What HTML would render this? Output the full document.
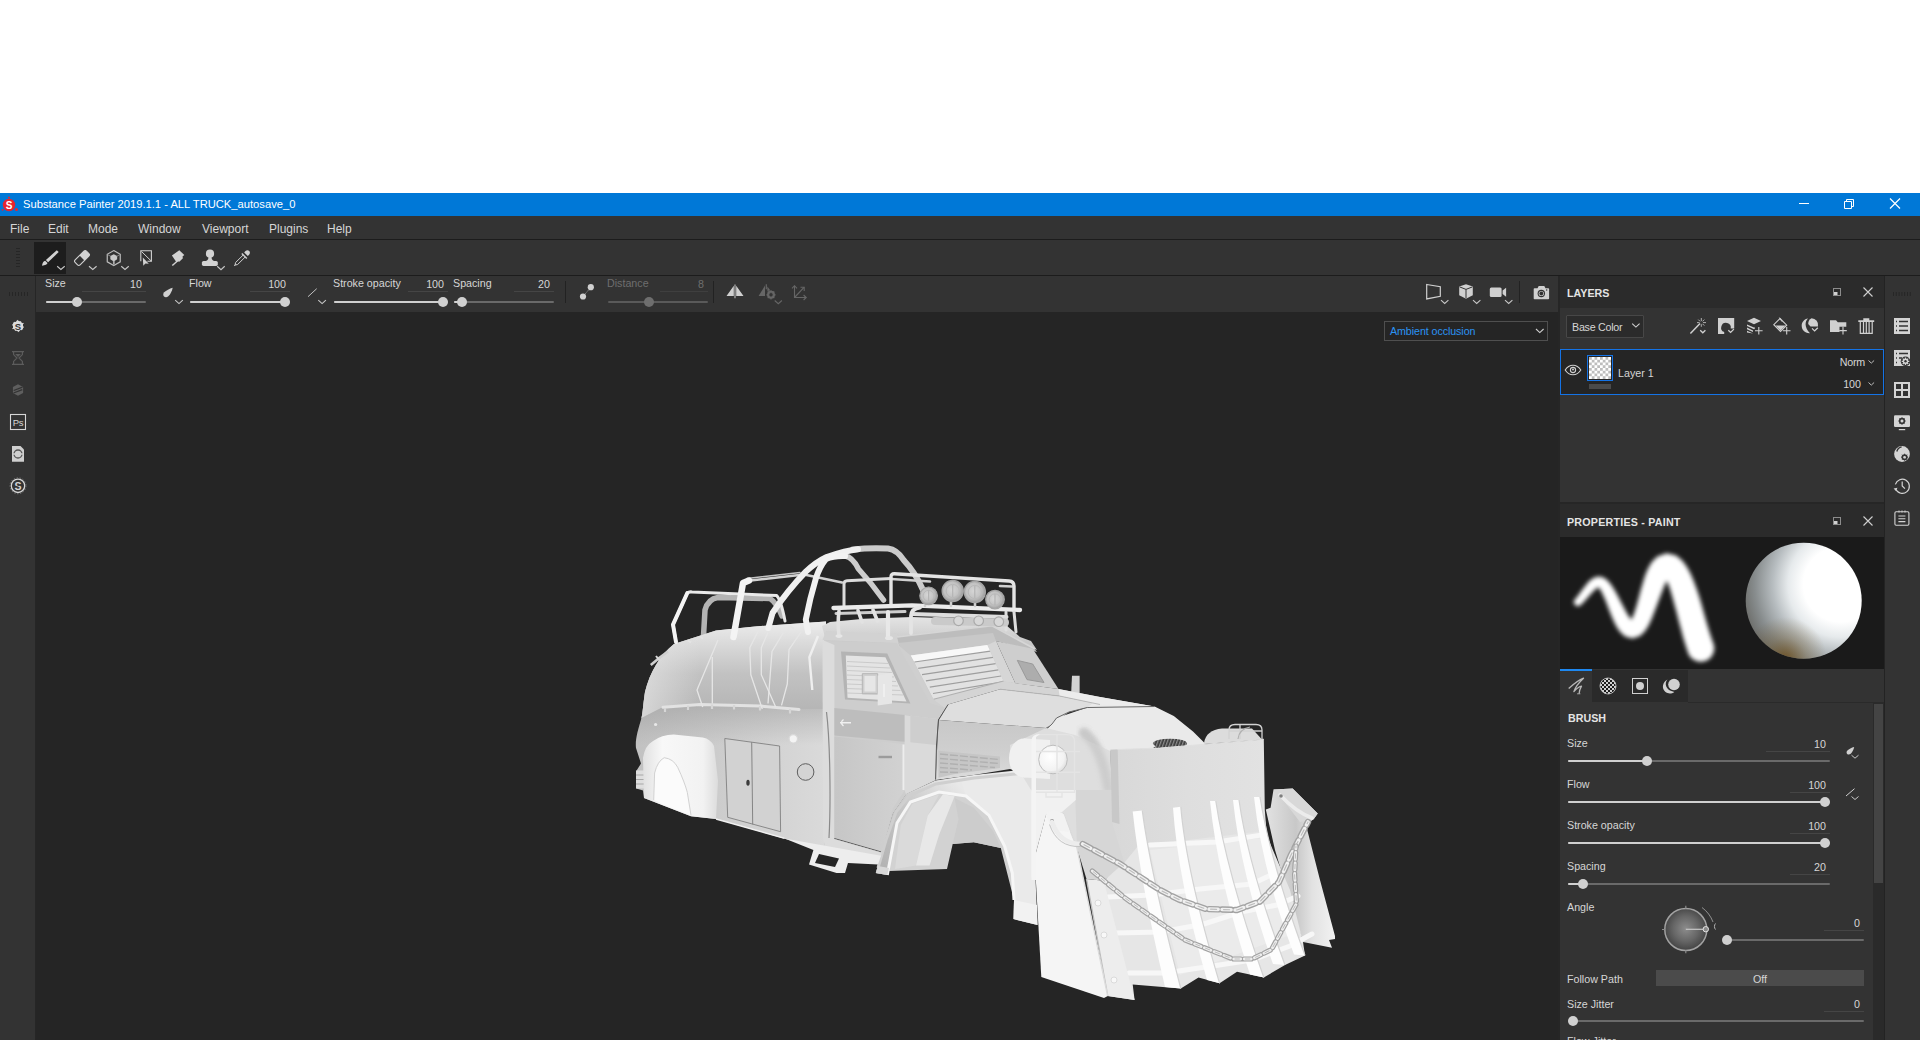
<!DOCTYPE html>
<html lang="en">
<head>
<meta charset="utf-8">
<title>Substance Painter 2019.1.1 - ALL TRUCK_autosave_0</title>
<style>
html,body{margin:0;padding:0;}
body{width:1920px;height:1040px;background:#fff;position:relative;overflow:hidden;font-family:"Liberation Sans","DejaVu Sans",sans-serif;font-size:10.7px;color:#d6d6d6;}
.a{position:absolute;}
.t{position:absolute;white-space:nowrap;line-height:14px;height:14px;}
.r{text-align:right;}
.b{font-weight:bold;}
.dim{color:#6e6e6e;}
.trk{position:absolute;height:2px;background:#6a6a6a;border-radius:1px;}
.fil{position:absolute;height:2px;background:#d0d0d0;border-radius:1px;}
.kn{position:absolute;width:10px;height:10px;border-radius:5px;background:#d0d0d0;}
.ul{position:absolute;height:1px;background:#454545;}
.sep{position:absolute;width:1px;background:#222;}
svg{position:absolute;overflow:visible;}
</style>
</head>
<body>
<!-- window background -->
<div class="a" style="left:0;top:193px;width:1920px;height:847px;background:#333333"></div>

<!-- title bar -->
<div class="a" id="titlebar" style="left:0;top:193px;width:1920px;height:23px;background:#0078d7"></div>
<svg style="left:1px;top:195px" width="18" height="18" viewBox="0 0 18 18">
  <circle cx="8" cy="10" r="6.2" fill="#e8232e"/>
  <circle cx="8" cy="2.4" r="1" fill="#e8232e"/>
  <circle cx="15.5" cy="14.6" r="1.5" fill="#e8232e"/>
  <circle cx="1.6" cy="14.8" r="0.9" fill="#e8232e"/>
  <text x="8" y="13.6" font-size="10" font-weight="bold" text-anchor="middle" fill="#fff" font-family="Liberation Sans, sans-serif">S</text>
</svg>
<div class="t" id="titletext" style="left:23px;top:197px;font-size:11.2px;color:#fff">Substance Painter 2019.1.1 - ALL TRUCK_autosave_0</div>
<svg style="left:1780px;top:193px" width="140" height="23" viewBox="0 0 140 23" fill="none" stroke="#fff" stroke-width="1">
  <path d="M19 10.5h10"/>
  <path d="M64.5 8.500h7v7h-7z M66.500 8.500v-2h7v7h-2"/>
  <path d="M110 5.500l10 10 M120 5.500l-10 10" stroke-width="1.2"/>
</svg>

<!-- menu bar -->
<div class="a" style="left:0;top:239px;width:1920px;height:1px;background:#1c1c1c"></div>
<div class="t menu" style="left:10px;top:222px;font-size:12px">File</div>
<div class="t menu" style="left:48px;top:222px;font-size:12px">Edit</div>
<div class="t menu" style="left:88px;top:222px;font-size:12px">Mode</div>
<div class="t menu" style="left:138px;top:222px;font-size:12px">Window</div>
<div class="t menu" style="left:202px;top:222px;font-size:12px">Viewport</div>
<div class="t menu" style="left:269px;top:222px;font-size:12px">Plugins</div>
<div class="t menu" style="left:327px;top:222px;font-size:12px">Help</div>

<!-- tool bar -->
<div class="a" style="left:0;top:275px;width:1920px;height:1px;background:#1c1c1c"></div>
<div class="a" style="left:34px;top:242px;width:32px;height:32px;background:#1d1d1d"></div>
<!-- grip -->
<svg style="left:16px;top:248px" width="4" height="22" viewBox="0 0 4 22" stroke="#262626" stroke-width="1"><path d="M0 .5h4M0 3.500h4M0 6.500h4M0 9.500h4M0 12.500h4M0 15.500h4M0 18.500h4"/></svg>
<svg style="left:0;top:240px" width="300" height="36" viewBox="0 0 300 36" fill="#d2d2d2" stroke="none">
  <!-- brush -->
  <path d="M56.800 10.200l1.900 1.900-10.600 10.100-2.200-2.200z"/>
  <path d="M45.200 20.800l2.300 2.300c-.2 1.500-2.300 2.400-5.500 2.700.4-2.900 1.500-4.700 3.200-5z"/>
  <path d="M57.200 26.250l3.700 3.200 3.800-3.200" fill="none" stroke="#c8c8c8" stroke-width="1.100"/>
  <!-- eraser -->
  <g transform="translate(82 18) rotate(-45)">
    <rect x="-8" y="-3.500" width="16" height="7" rx="1.800" fill="none" stroke="#d2d2d2" stroke-width="1.100"/>
    <path d="M0 -3.500h6.200a1.800 1.800 0 0 1 1.800 1.800v3.400a1.800 1.800 0 0 1-1.800 1.800h-6.200z"/>
  </g>
  <path d="M89 26.250l3.800 3.200 3.800-3.200" fill="none" stroke="#c8c8c8" stroke-width="1.100"/>
  <!-- cube -->
  <path d="M113.750 10.600l6.500 3.750v7.500l-6.500 3.750-6.500-3.750v-7.500z" fill="none" stroke="#bdbdbd" stroke-width="1.200"/>
  <path d="M113.750 14.200l3.400 1.800v3.300l-2.600 1.600v3.300h-1.600v-3.300l-2.600-1.600v-3.300z" fill="#c8c8c8"/>
  <path d="M107.600 14.600l3.400 1.900M119.900 14.600l-3.400 1.900M113.750 21v4.300" stroke="#9a9a9a" stroke-width=".8" fill="none"/>
  <path d="M121.250 26.250l3.750 3.200 3.750-3.200" fill="none" stroke="#c8c8c8" stroke-width="1.100"/>
  <!-- selection -->
  <path d="M140.800 21.200v-10.400h10.600v10.400h-4" fill="none" stroke="#d2d2d2" stroke-width="1.100"/>
  <path d="M141.500 11.500l9.500 9.300" fill="none" stroke="#d2d2d2" stroke-width="1"/>
  <path d="M142.800 17.600l.5 8.200 2.100-2.300 3.400.2z"/>
  <!-- smudge -->
  <path d="M179.300 10.200l5 4.700-1.800 1.700.4 1.600-3.600 3.600-1.600-.6-1.200 1.100-4.600-6.900z"/>
  <path d="M178 20.400l-5.700 5.200" fill="none" stroke="#d2d2d2" stroke-width="1.400"/>
  <!-- stamp -->
  <circle cx="210" cy="13.700" r="4.100"/>
  <path d="M208.600 16h2.800c0 2.500.6 4.200 2.600 5h-8c2-.8 2.600-2.500 2.600-5z"/>
  <rect x="201.900" y="20.900" width="15.900" height="5" rx="1.600"/>
  <path d="M217.200 26.250l3.800 3.400 3.700-3.400" fill="none" stroke="#c8c8c8" stroke-width="1.100"/>
  <!-- eyedropper -->
  <path d="M244.200 12.400l3.600 3.500 1.300-1.200c1.100-1.100 1.100-2.700.1-3.700-1-1-2.600-1-3.700.1z"/>
  <path d="M242.300 13l5 4.900-1 1-5-4.900z"/>
  <path d="M243 15.200l-7.400 7.300-.6 2.600 2.600-.6 7.400-7.300" fill="none" stroke="#d2d2d2" stroke-width="1"/>
  <path d="M235.300 24.800l-1.200 1.100" fill="none" stroke="#d2d2d2" stroke-width=".9"/>
</svg>


<!-- second toolbar / viewport -->
<div class="a" id="viewport" style="left:36px;top:312px;width:1522px;height:728px;background:#252525"></div>
<div class="a" style="left:35px;top:276px;width:1px;height:764px;background:#262626"></div>
<div class="a" style="left:1558px;top:276px;width:2px;height:764px;background:#262626"></div>
<svg style="left:9px;top:292px" width="20" height="4" viewBox="0 0 20 4" stroke="#262626" stroke-width="1"><path d="M.5 0v4M3.500 0v4M6.500 0v4M9.500 0v4M12.500 0v4M15.500 0v4M18.500 0v4"/></svg>
<!-- ===== context toolbar ===== -->
<div class="t" style="left:45px;top:276px">Size</div>
<div class="t r" style="left:102px;width:40px;top:277px">10</div>
<div class="ul" style="left:82px;top:291px;width:64px"></div>
<div class="trk" style="left:46px;top:301px;width:100px"></div>
<div class="fil" style="left:46px;top:301px;width:31px"></div>
<div class="kn" style="left:72px;top:297px"></div>

<div class="t" style="left:189px;top:276px">Flow</div>
<div class="t r" style="left:246px;width:40px;top:277px">100</div>
<div class="ul" style="left:250px;top:291px;width:40px"></div>
<div class="trk" style="left:190px;top:301px;width:100px"></div>
<div class="fil" style="left:190px;top:301px;width:95px"></div>
<div class="kn" style="left:280px;top:297px"></div>

<div class="t" style="left:333px;top:276px">Stroke opacity</div>
<div class="t r" style="left:404px;width:40px;top:277px">100</div>
<div class="ul" style="left:408px;top:291px;width:40px"></div>
<div class="trk" style="left:334px;top:301px;width:114px"></div>
<div class="fil" style="left:334px;top:301px;width:109px"></div>
<div class="kn" style="left:438px;top:297px"></div>

<div class="t" style="left:453px;top:276px">Spacing</div>
<div class="t r" style="left:510px;width:40px;top:277px">20</div>
<div class="ul" style="left:514px;top:291px;width:40px"></div>
<div class="trk" style="left:454px;top:301px;width:100px"></div>
<div class="fil" style="left:454px;top:301px;width:8px"></div>
<div class="kn" style="left:457px;top:297px"></div>

<div class="sep" style="left:565px;top:281px;height:22px"></div>

<div class="t dim" style="left:607px;top:276px">Distance</div>
<div class="t r dim" style="left:664px;width:40px;top:277px">8</div>
<div class="ul" style="left:660px;top:291px;width:48px;background:#3f3f3f"></div>
<div class="trk" style="left:608px;top:301px;width:100px;background:#5a5a5a"></div>
<div class="kn" style="left:644px;top:297px;background:#6e6e6e"></div>

<div class="sep" style="left:713px;top:281px;height:22px"></div>
<div class="sep" style="left:1519px;top:281px;height:22px"></div>

<svg style="left:150px;top:276px" width="700" height="36" viewBox="150 0 700 36" fill="#d0d0d0">
  <!-- size pressure icon -->
  <path d="M172.700 11.700c-.6 3.200-2.400 6.700-4.400 8.600-1.300 1.200-3.200 1.300-4.300.2-1.100-1.100-1-3 .2-4.200 1.900-1.900 5.300-3.800 8.500-4.600z"/>
  <path d="M175.200 24.200l3.800 3.400 3.800-3.400" fill="none" stroke="#c8c8c8" stroke-width="1.100"/>
  <!-- flow line icon -->
  <path d="M308 20.700l8.700-8" fill="none" stroke="#d0d0d0" stroke-width=".9"/>
  <path d="M318.300 24.200l3.800 3.400 3.800-3.400" fill="none" stroke="#c8c8c8" stroke-width="1.100"/>
  <!-- lazy mouse -->
  <circle cx="590.800" cy="11.200" r="3.100"/>
  <circle cx="583" cy="20.500" r="3.100"/>
  <path d="M588.700 13.800l-3.600 4.200" stroke="#bdbdbd" stroke-width=".9" stroke-dasharray="1 1.400" fill="none"/>
  <!-- symmetry -->
  <path d="M733.800 9.800v10.200h-7.300z M736.200 9.800v10.200h7.300z" fill="#d0d0d0"/>
  <path d="M735 8.600v13.600" stroke="#a0a0a0" stroke-width="1.400"/>
  <!-- symmetry settings (dim) -->
  <g fill="#666">
    <path d="M765 9.600v10.400h-6.400z"/><path d="M766.300 8.200v5" stroke="#666" stroke-width="1.200"/>
    <path d="M767.400 10.500l3 4-3 .6z"/>
    <circle cx="771" cy="18.800" r="3.100" fill="none" stroke="#666" stroke-width="1.700"/>
    <path d="M771 14.200v9.200M766.400 18.800h9.200M767.700 15.500l6.600 6.600M774.300 15.500l-6.600 6.600" stroke="#666" stroke-width="1.200"/>
    <circle cx="771" cy="18.800" r="1.700" fill="#333"/>
    <path d="M774.700 24.500l3.600 3.200 3.600-3.200" fill="none" stroke="#666" stroke-width="1.100"/>
  </g>
  <!-- transform (dim) -->
  <g fill="none" stroke="#666" stroke-width="1.100">
    <path d="M794.500 9.800v11.700h11.700"/>
    <path d="M792 12.300l2.500-2.600 2.500 2.600"/>
    <path d="M803.600 19l2.600 2.500-2.600 2.500"/>
    <path d="M795 21l9-9.600"/>
    <path d="M800.500 11.200h3.700v3.700"/>
  </g>
</svg>

<!-- right side view icons -->
<svg style="left:1420px;top:276px" width="140" height="36" viewBox="1420 0 140 36" fill="#d0d0d0">
  <path d="M1426.700 8.500l13.600 2.200v9.600l-13.600 2.600z" fill="none" stroke="#d0d0d0" stroke-width="1.200"/>
  <path d="M1441 24.200l3.700 3.200 3.700-3.200" fill="none" stroke="#c8c8c8" stroke-width="1.100"/>
  <path d="M1466 8.300l6.800 2.300v8.600l-6.800 3.500-6.800-3.500v-8.600z"/>
  <path d="M1459.600 10.900l6.400 2.500 6.400-2.500M1466 13.400v8.800" fill="none" stroke="#333" stroke-width="1"/>
  <path d="M1473 24.200l3.700 3.200 3.700-3.200" fill="none" stroke="#c8c8c8" stroke-width="1.100"/>
  <rect x="1489.800" y="11.400" width="11.800" height="9.600" rx="1.500"/>
  <path d="M1502.600 14.600l3.500-2.800v9l-3.500-2.800z"/>
  <path d="M1505 24.200l3.700 3.200 3.700-3.200" fill="none" stroke="#c8c8c8" stroke-width="1.100"/>
  <!-- photo camera -->
  <path d="M1534.500 12.300h3l1.200-2.400h5.600l1.200 2.400h2.800c.5 0 .8.300.8.800v9.300c0 .5-.3.800-.8.800h-13.800c-.5 0-.8-.3-.8-.8v-9.300c0-.5.300-.8.800-.8z"/>
  <circle cx="1541.300" cy="17.500" r="3.700" fill="#333"/>
  <circle cx="1541.300" cy="17.500" r="2.600" fill="#d0d0d0"/>
  <circle cx="1541.300" cy="17.500" r="1.900" fill="#333"/>
  <circle cx="1546.700" cy="14" r=".7" fill="#333"/>
</svg>

<!-- Ambient occlusion dropdown -->
<div class="a" style="left:1384px;top:321px;width:162px;height:18px;border:1px solid #4f4f4f;background:#252525"></div>
<div class="t" style="left:1390px;top:324px;color:#2b93f3;letter-spacing:-0.08px">Ambient occlusion</div>
<svg style="left:1534px;top:326px" width="12" height="10" viewBox="0 0 12 10" fill="none" stroke="#d0d0d0" stroke-width="1.100"><path d="M2 3l3.800 3.600 3.800-3.600"/></svg>
<!-- ===== left dock icons ===== -->
<svg style="left:0;top:312px" width="36" height="200" viewBox="0 312 36 200">
  <!-- substance share -->
  <path d="M18 319.800l5.600 3.100v6.200l-5.600 3.100-5.600-3.100v-6.200z" fill="#dcdcdc"/>
  <path d="M18 319.800l5.600 3.100v6.200l-5.600 3.100-5.600-3.100v-6.200z" fill="none" stroke="#333" stroke-width="1.200" stroke-dasharray="2.200 1.600"/>
  <path d="M18 320.800l4.600 2.600v5.200l-4.600 2.600-4.600-2.600v-5.200z" fill="#dcdcdc"/>
  <text x="18" y="329.600" font-size="9.500" font-weight="bold" text-anchor="middle" fill="#333" font-family="Liberation Sans, sans-serif">S</text>
  <!-- hourglass -->
  <g stroke="#5c5c5c" stroke-width="1.200" fill="none">
    <path d="M12 351.600h12M12 364.400h12"/>
    <path d="M13.600 352v2.600l3.400 3.400-3.400 3.400v2.600M22.400 352v2.600l-3.400 3.400 3.400 3.400v2.600"/>
  </g>
  <path d="M15.200 354h5.600l-2.800 3z" fill="#5c5c5c"/>
  <!-- substance dim -->
  <path d="M18 384.200l5.100 2.900v5.800l-5.100 2.900-5.100-2.900v-5.800z" fill="#5e5e5e"/>
  <path d="M22.500 387.200l-8.800 3.300M22.300 389.700l-8.800 3.300" stroke="#333" stroke-width="1.300"/>
  <!-- Ps -->
  <rect x="10.500" y="414.500" width="15" height="15" fill="none" stroke="#d6d6d6" stroke-width="1.100"/>
  <text x="18" y="426" font-size="9.500" text-anchor="middle" fill="#d6d6d6" font-family="Liberation Sans, sans-serif" letter-spacing="-.2">Ps</text>
  <!-- resource updater -->
  <path d="M12 446h8.500l3.500 3.500v12.200h-12z" fill="#cfcfcf"/>
  <circle cx="18" cy="454" r="4" fill="none" stroke="#555" stroke-width="1.300"/>
  <path d="M13 454h3M20 454h3" stroke="#cfcfcf" stroke-width="1.600"/>
  <!-- substance source -->
  <circle cx="18" cy="485.800" r="6.700" fill="none" stroke="#d6d6d6" stroke-width="1.300"/>
  <circle cx="18" cy="485.800" r="8" fill="none" stroke="#8a8a8a" stroke-width=".7" stroke-dasharray="1.500 1.500"/>
  <text x="18" y="489.600" font-size="10.500" font-weight="bold" text-anchor="middle" fill="#d6d6d6" font-family="Liberation Sans, sans-serif">S</text>
  <path d="M13.500 487.500l9-3.400" stroke="#333" stroke-width="1"/>
</svg>
<!-- ===== LAYERS panel ===== -->
<div class="a" style="left:1560px;top:276px;width:324px;height:32px;background:#2b2b2b"></div>
<div class="t b" id="layers-title" style="left:1567px;top:286px;font-size:10.7px;color:#e4e4e4">LAYERS</div>
<svg style="left:1830px;top:284px" width="50" height="16" viewBox="1830 284 50 16" fill="none" stroke="#d0d0d0" stroke-width="1">
  <rect x="1833.500" y="288.500" width="7" height="7" stroke="#8c8c8c"/>
  <rect x="1834" y="292" width="3.500" height="3" fill="#d0d0d0" stroke="none"/>
  <path d="M1863.500 287.500l9 9M1872.500 287.500l-9 9" stroke-width="1.100"/>
</svg>
<!-- channel dropdown -->
<div class="a" style="left:1566px;top:315px;width:78px;height:23px;border:1px solid #474747;background:#2b2b2b;box-sizing:border-box;border-radius:1px"></div>
<div class="t" style="left:1572px;top:320px;letter-spacing:-0.25px">Base Color</div>
<svg style="left:1630px;top:321px" width="12" height="10" viewBox="0 0 12 10" fill="none" stroke="#d0d0d0" stroke-width="1.100"><path d="M2.200 2.600l3.700 3.500 3.700-3.500"/></svg>
<!-- layer toolbar icons -->
<svg style="left:1685px;top:312px" width="200" height="28" viewBox="1685 312 200 28" fill="#d0d0d0">
  <!-- wand -->
  <path d="M1690.400 333.500l9.600-10" fill="none" stroke="#d0d0d0" stroke-width="1.500"/>
  <path d="M1701.300 318v3M1701.300 324.200v2.600M1697 322.600h2.600M1703 322.600h3M1698.300 319.600l1.800 1.800M1704.300 319.600l-1.800 1.800M1704.300 325.600l-1.800-1.800" fill="none" stroke="#d0d0d0" stroke-width=".8"/>
  <path d="M1700.200 330.200l2.600 2.600 2.600-2.600" fill="none" stroke="#d0d0d0" stroke-width="1.300"/>
  <!-- mask -->
  <path d="M1718 318h16.200v10.500h-3.500a4.800 4.800 0 1 0-6.500 3.600v1.800h-6.200z"/>
  <path d="M1728.300 330.200l2.300 2.200 3.300-3.300" fill="none" stroke="#d0d0d0" stroke-width="1.300"/>
  <!-- add layer -->
  <path d="M1754 317.800l7 3.200-7 3.200-7-3.200z"/>
  <path d="M1747 324.400l7 3.200.8-.4v1.600l-.8.400-7-3.200zM1747 327.600l6 2.800v1.600l-6-2.800zM1747 330.800l6 2.800v0l-6-1.200z"/>
  <path d="M1758.800 327v7.600M1755 330.800h7.600" stroke="#d0d0d0" stroke-width="1.100" fill="none"/>
  <!-- fill layer -->
  <path d="M1780 318.500l6.700 6.700-6.200 6.200-6.700-6.700z" fill="none" stroke="#d0d0d0" stroke-width="1.100"/>
  <path d="M1775.600 325.400h10l-5.100 5.100z"/>
  <path d="M1779.400 317.600l2.600 4" stroke="#d0d0d0" stroke-width="1" fill="none"/>
  <path d="M1786.700 327v7.600M1782.900 330.800h7.600" stroke="#d0d0d0" stroke-width="1.100" fill="none"/>
  <!-- effects -->
  <path d="M1808 318.600c-3 2.600-4 8.800 2 14.600-5.500.2-8.300-3.800-8.300-7.400 0-3.600 2.600-6.800 6.300-7.200z"/>
  <path d="M1811.500 318.300a6.800 6.800 0 0 1 6.500 8.200h-7.500l-2.300-2.600a6.500 6.500 0 0 1 3.300-5.600z"/>
  <path d="M1812 328.400l2.600 2.500 3.200-3.200" fill="none" stroke="#d0d0d0" stroke-width="1.300"/>
  <!-- folder -->
  <path d="M1830 320.200h6l1.800 2h8.500v4.500h-6.800v5.300h-9.500z"/>
  <path d="M1843 326.800v7.600M1839.200 330.600h7.600" stroke="#d0d0d0" stroke-width="1.100" fill="none"/>
  <!-- trash -->
  <path d="M1858.300 320.300h15.900v1.700h-15.900zM1863.300 318.200h6v2.100h-6z"/>
  <path d="M1860.300 322v11.300h11.900v-11.300" fill="none" stroke="#d0d0d0" stroke-width="1.200"/>
  <path d="M1863.500 322v11M1866.300 322v11M1869.100 322v11" fill="none" stroke="#d0d0d0" stroke-width="1.200"/>
</svg>
<!-- layer row -->
<div class="a" style="left:1560px;top:349px;width:324px;height:46px;box-sizing:border-box;border:1px solid #1473e6;background:#252525"></div>
<svg style="left:1564px;top:362px" width="18" height="16" viewBox="0 0 18 16" fill="none" stroke="#d0d0d0">
  <path d="M1.200 8c2-3.200 4.800-4.800 7.800-4.800s5.800 1.600 7.800 4.800c-2 3.200-4.800 4.800-7.800 4.800s-5.800-1.600-7.800-4.800z" stroke-width="1.100"/>
  <circle cx="9" cy="8" r="2.600" stroke-width="1.100"/>
  <circle cx="9" cy="7.600" r="1" fill="#d0d0d0" stroke="none"/>
</svg>
<div class="a" style="left:1587px;top:355px;width:26px;height:26px;box-sizing:border-box;border:1px solid #1473e6;background:#252525"></div>
<svg style="left:1589px;top:357px" width="22" height="22" viewBox="0 0 22 22">
  <defs><pattern id="chk" width="5.500" height="5.500" patternUnits="userSpaceOnUse"><rect width="5.500" height="5.500" fill="#fff"/><rect x="0" y="0" width="2.750" height="2.750" fill="#bdbdbd"/><rect x="2.750" y="2.750" width="2.750" height="2.750" fill="#bdbdbd"/></pattern></defs>
  <rect width="22" height="22" fill="url(#chk)"/>
</svg>
<div class="a" style="left:1589px;top:384px;width:22px;height:5px;background:#4a4a4a"></div>
<div class="t" style="left:1618px;top:366px">Layer 1</div>
<div class="t r" style="left:1820px;width:45px;top:355px;letter-spacing:-0.2px">Norm</div>
<div class="t r" style="left:1820px;width:41px;top:377px">100</div>
<svg style="left:1866px;top:357px" width="12" height="32" viewBox="0 0 12 32" fill="none" stroke="#bdbdbd" stroke-width="1"><path d="M2.500 3.500l2.800 2.600 2.800-2.600M2.500 25.500l2.800 2.600 2.800-2.600"/></svg>
<!-- divider between panels -->
<div class="a" style="left:1560px;top:502px;width:324px;height:2px;background:#262626"></div>
<!-- ===== PROPERTIES - PAINT panel ===== -->
<div class="a" style="left:1560px;top:504px;width:324px;height:33px;background:#2b2b2b"></div>
<div class="t b" id="props-title" style="left:1567px;top:515px;font-size:10.7px;letter-spacing:.22px;color:#e4e4e4">PROPERTIES - PAINT</div>
<svg style="left:1830px;top:513px" width="50" height="16" viewBox="1830 513 50 16" fill="none" stroke="#d0d0d0" stroke-width="1">
  <rect x="1833.500" y="517.500" width="7" height="7" stroke="#8c8c8c"/>
  <rect x="1834" y="521" width="3.500" height="3" fill="#d0d0d0" stroke="none"/>
  <path d="M1863.500 516.500l9 9M1872.500 516.500l-9 9" stroke-width="1.100"/>
</svg>
<!-- preview -->
<div class="a" style="left:1560px;top:537px;width:324px;height:132px;background:#1a1a1a"></div>
<svg style="left:1560px;top:537px" width="324" height="132" viewBox="1560 537 324 132">
  <defs>
    <filter id="blur1" x="-20%" y="-20%" width="140%" height="140%"><feGaussianBlur stdDeviation="2.200"/></filter>
    <radialGradient id="sph" cx="0.820" cy="0.360" r="0.950">
      <stop offset="0" stop-color="#ffffff"/>
      <stop offset="0.340" stop-color="#ffffff"/>
      <stop offset="0.480" stop-color="#e6eaec"/>
      <stop offset="0.620" stop-color="#b6bcbf"/>
      <stop offset="0.780" stop-color="#888d8e"/>
      <stop offset="1" stop-color="#585650"/>
    </radialGradient>
    <radialGradient id="sphwarm" cx="0.340" cy="1.000" r="0.360">
      <stop offset="0" stop-color="#6a460c" stop-opacity=".75"/>
      <stop offset="0.500" stop-color="#6e5220" stop-opacity=".3"/>
      <stop offset="1" stop-color="#6e5220" stop-opacity="0"/>
    </radialGradient>
    <clipPath id="pvclip"><rect x="1560" y="537" width="324" height="132"/></clipPath>
  </defs>
  <g clip-path="url(#pvclip)" filter="url(#blur1)" fill="#fff" stroke="none">
    <path d="M1580.9 604.8L1582.9 602.9L1584.8 600.8L1586.7 598.8L1588.4 596.7L1590.1 594.8L1591.8 593.0L1593.3 591.3L1594.8 589.9L1596.1 588.8L1597.2 588.0L1598.1 587.5L1598.7 587.4L1598.2 587.4L1598.6 587.6L1599.7 588.8L1601.5 591.7L1603.4 595.7L1605.5 600.6L1607.6 606.1L1609.8 611.7L1612.1 617.4L1614.6 622.9L1617.3 628.0L1620.6 632.5L1625.2 636.5L1632.4 638.5L1640.0 636.0L1645.1 631.0L1648.7 625.2L1651.7 618.7L1654.5 611.6L1657.3 604.2L1660.0 596.9L1662.7 589.9L1665.3 583.7L1667.8 578.9L1669.7 576.0L1670.0 575.8L1667.3 576.7L1664.6 576.2L1664.5 576.5L1666.0 578.9L1667.9 583.3L1670.0 589.1L1672.1 596.1L1674.2 603.8L1676.5 612.1L1678.7 620.7L1681.0 629.3L1683.3 637.9L1685.8 646.1L1688.3 653.5A13.5 13.5 0 0 0 1713.7 644.5L1711.3 637.7L1708.9 630.3L1706.5 622.2L1704.1 613.7L1701.7 605.1L1699.2 596.6L1696.4 588.3L1693.5 580.5L1690.4 573.2L1686.8 566.7L1682.4 560.7L1676.1 555.6L1666.7 553.3L1657.4 556.4L1651.6 562.2L1647.9 568.7L1645.1 575.6L1642.8 583.0L1640.6 590.6L1638.6 598.2L1636.6 605.5L1634.6 612.0L1632.6 617.3L1630.8 620.8L1630.2 621.9L1631.6 621.5L1633.4 621.9L1632.6 621.3L1630.7 619.0L1628.2 615.4L1625.6 610.9L1622.9 605.8L1620.1 600.4L1617.3 595.0L1614.5 589.9L1611.5 585.3L1608.3 581.3L1604.4 578.1L1599.8 576.6L1596.1 577.0L1593.5 578.1L1591.3 579.5L1589.4 581.1L1587.6 582.9L1586.0 584.9L1584.4 586.9L1582.9 589.0L1581.4 591.1L1579.8 593.3L1578.3 595.3L1576.8 597.3L1575.1 599.2A4.0 4.0 0 0 0 1580.9 604.8Z"/>
  </g>
  <circle cx="1803.700" cy="600.700" r="58" fill="url(#sph)"/>
  <circle cx="1803.700" cy="600.700" r="58" fill="url(#sphwarm)"/>
</svg>
<!-- tabs -->
<div class="a" style="left:1592px;top:670px;width:96px;height:32px;background:#2a2a2a"></div>
<div class="a" style="left:1688px;top:702px;width:196px;height:1px;background:#2a2a2a"></div>
<div class="a" style="left:1560px;top:669px;width:32px;height:2px;background:#1e88f0"></div>
<svg style="left:1560px;top:672px" width="130" height="30" viewBox="1560 672 130 30" fill="#d0d0d0">
  <!-- brush scribble -->
  <path d="M1568.700 688.600c5-4.600 10.500-8.800 14.800-10.400-3.400 3.200-8.400 9.400-9.600 13.400 2.400-2.600 5-5 7.600-5.400-1.200 2-2.200 5-2.400 7.600" fill="none" stroke="#b8b8b8" stroke-width="1.300" stroke-linejoin="round"/>
  <path d="M1577 693.800h3.400" stroke="#b8b8b8" stroke-width=".8"/>
  <!-- material checker ball -->
  <defs>
    <pattern id="chk2" x="1600" y="678" width="4" height="4" patternUnits="userSpaceOnUse"><rect width="4" height="4" fill="#d0d0d0"/><rect width="2" height="2" fill="#1c1c1c"/><rect x="2" y="2" width="2" height="2" fill="#1c1c1c"/></pattern>
  </defs>
  <circle cx="1608" cy="686" r="8" fill="url(#chk2)" stroke="#d0d0d0" stroke-width=".8"/>
  <!-- alpha -->
  <rect x="1632.500" y="678.500" width="15" height="15" fill="none" stroke="#d0d0d0" stroke-width="1"/>
  <circle cx="1640" cy="686" r="4"/>
  <!-- stencil -->
  <path d="M1667.500 679.500c-3.500 3.600-2 11 6.800 12.400-2 1.600-4.600 2-6.800 1.200-3.400-1.200-5.200-4.600-4.400-8 .6-2.600 2.200-4.600 4.400-5.600z"/>
  <circle cx="1674" cy="684.500" r="5.800"/>
</svg>
<!-- scrollbar -->
<div class="a" style="left:1873px;top:703px;width:11px;height:337px;background:#2a2a2a"></div>
<div class="a" style="left:1874px;top:704px;width:9px;height:179px;background:#444"></div>

<div class="t b" id="brush-title" style="left:1568px;top:711px;font-size:10.7px;color:#e4e4e4">BRUSH</div>

<!-- Size -->
<div class="t" style="left:1567px;top:736px">Size</div>
<div class="t r" style="left:1786px;width:40px;top:737px">10</div>
<div class="ul" style="left:1766px;top:751px;width:64px"></div>
<div class="trk" style="left:1568px;top:760px;width:262px"></div>
<div class="fil" style="left:1568px;top:760px;width:79px"></div>
<div class="kn" style="left:1642px;top:756px"></div>
<!-- Flow -->
<div class="t" style="left:1567px;top:777px">Flow</div>
<div class="t r" style="left:1786px;width:40px;top:778px">100</div>
<div class="ul" style="left:1790px;top:792px;width:40px"></div>
<div class="trk" style="left:1568px;top:801px;width:262px"></div>
<div class="fil" style="left:1568px;top:801px;width:257px"></div>
<div class="kn" style="left:1820px;top:797px"></div>
<!-- Stroke opacity -->
<div class="t" style="left:1567px;top:818px">Stroke opacity</div>
<div class="t r" style="left:1786px;width:40px;top:819px">100</div>
<div class="ul" style="left:1790px;top:833px;width:40px"></div>
<div class="trk" style="left:1568px;top:842px;width:262px"></div>
<div class="fil" style="left:1568px;top:842px;width:257px"></div>
<div class="kn" style="left:1820px;top:838px"></div>
<!-- Spacing -->
<div class="t" style="left:1567px;top:859px">Spacing</div>
<div class="t r" style="left:1786px;width:40px;top:860px">20</div>
<div class="ul" style="left:1790px;top:874px;width:40px"></div>
<div class="trk" style="left:1568px;top:883px;width:262px"></div>
<div class="fil" style="left:1568px;top:883px;width:15px"></div>
<div class="kn" style="left:1578px;top:879px"></div>
<!-- side icons -->
<svg style="left:1840px;top:740px" width="30" height="70" viewBox="1840 740 30 70" fill="#d0d0d0">
  <path d="M1854.200 747c-.5 2.600-1.900 5.300-3.500 6.800-1 1-2.600 1.100-3.500.2-.9-.9-.8-2.400.2-3.400 1.500-1.500 4.200-3 6.800-3.600z"/>
  <path d="M1851.500 755.200l3.500 3 3.500-3" fill="none" stroke="#c8c8c8" stroke-width="1"/>
  <path d="M1846 796l8.500-7.300" fill="none" stroke="#d0d0d0" stroke-width="1"/>
  <path d="M1851.500 796.500l3.500 3 3.500-3" fill="none" stroke="#c8c8c8" stroke-width="1"/>
</svg>
<!-- Angle -->
<div class="t" style="left:1567px;top:900px">Angle</div>
<svg style="left:1655px;top:900px" width="70" height="56" viewBox="1655 900 70 56">
  <defs><radialGradient id="dial" cx="0.500" cy="0.480" r="0.500"><stop offset="0" stop-color="#8c8c8c"/><stop offset="0.600" stop-color="#666"/><stop offset="1" stop-color="#474747"/></radialGradient></defs>
  <circle cx="1685.800" cy="929.500" r="21" fill="url(#dial)" stroke="#a2a2a2" stroke-width="1.500"/>
  <path d="M1685.800 905.800v3M1685.800 950.200v3M1662 929.500h3" stroke="#8a8a8a" stroke-width="1.200" fill="none"/>
  <path d="M1685.800 929.300h18" stroke="#c8c8c8" stroke-width="1.200"/>
  <circle cx="1705.800" cy="929.200" r="2.700" fill="#8a8a8a" stroke="#e4e4e4" stroke-width="1"/>
  <path d="M1702 907.500c5 3.600 9 9 11 14.500" fill="none" stroke="#a8a8a8" stroke-width=".8"/>
  <path d="M1715.500 923.500c-1.400 1.600-1.400 4.400 0 6" fill="none" stroke="#bdbdbd" stroke-width=".9"/>
</svg>
<div class="t r" style="left:1820px;width:40px;top:916px">0</div>
<div class="ul" style="left:1824px;top:930px;width:40px"></div>
<div class="trk" style="left:1727px;top:939px;width:137px"></div>
<div class="kn" style="left:1722px;top:935px"></div>
<!-- Follow Path -->
<div class="t" style="left:1567px;top:972px">Follow Path</div>
<div class="a" style="left:1656px;top:970px;width:208px;height:16px;background:#4b4b4b"></div>
<div class="t" style="left:1656px;width:208px;top:972px;text-align:center">Off</div>
<!-- Size Jitter -->
<div class="t" style="left:1567px;top:997px">Size Jitter</div>
<div class="t r" style="left:1820px;width:40px;top:997px">0</div>
<div class="ul" style="left:1824px;top:1011px;width:40px"></div>
<div class="trk" style="left:1568px;top:1020px;width:296px"></div>
<div class="kn" style="left:1568px;top:1016px"></div>
<div class="t" style="left:1567px;top:1034px">Flow Jitter</div>
<!-- ===== right dock ===== -->
<div class="a" style="left:1884px;top:276px;width:1px;height:764px;background:#232323"></div>
<svg style="left:1885px;top:276px" width="35" height="260" viewBox="1885 276 35 260" fill="#d4d4d4">
  <path d="M1893.500 292v4M1896.300 292v4M1899.100 292v4M1901.900 292v4M1904.700 292v4M1907.500 292v4M1910.300 292v4" stroke="#262626" stroke-width="1" fill="none"/>
  <!-- texture set list -->
  <rect x="1894" y="318" width="16" height="16"/>
  <path d="M1896 321.500h1M1899 321.500h9M1896 326h1M1899 326h9M1896 330.500h1M1899 330.500h9" stroke="#333" stroke-width="1.600" fill="none"/>
  <!-- texture set settings -->
  <rect x="1894" y="350" width="16" height="16"/>
  <path d="M1896 353.500h1M1899 353.500h9M1896 358h1M1899 358h3M1896 362.500h1" stroke="#333" stroke-width="1.600" fill="none"/>
  <circle cx="1905.500" cy="361.300" r="4.800" fill="#333"/>
  <path d="M1905.500 357.500v7.600M1901.700 361.300h7.600M1902.800 358.600l5.400 5.400M1908.200 358.600l-5.400 5.400" stroke="#d4d4d4" stroke-width="1.300" fill="none"/>
  <circle cx="1905.500" cy="361.300" r="2.700" fill="#d4d4d4"/>
  <circle cx="1905.500" cy="361.300" r="1.200" fill="#333"/>
  <!-- shelf grid -->
  <rect x="1894" y="382" width="16" height="16"/>
  <path d="M1896 384h5v5h-5zM1903 384h5v5h-5zM1896 391h5v5h-5zM1903 391h5v5h-5z" fill="#333"/>
  <!-- display settings -->
  <rect x="1894" y="415.200" width="16" height="11.800" rx="1.200"/>
  <rect x="1898.800" y="429" width="6.400" height="1.200"/>
  <circle cx="1902" cy="421" r="2.400" fill="none" stroke="#333" stroke-width="1.500"/>
  <path d="M1902 417.400v7.200M1898.400 421h7.200M1899.500 418.500l5 5M1904.500 418.500l-5 5" stroke="#333" stroke-width="1" fill="none"/>
  <circle cx="1902" cy="421" r="1.300" fill="#d4d4d4"/>
  <!-- shader settings -->
  <circle cx="1902" cy="454" r="7.900"/>
  <path d="M1896.800 451.500c.6-2.400 2.400-4 4.800-4.600" stroke="#333" stroke-width="1.300" fill="none"/>
  <circle cx="1904.600" cy="457.200" r="2.300" fill="none" stroke="#333" stroke-width="1.500"/>
  <path d="M1904.600 453.700v7M1901.100 457.200h7M1902.100 454.700l5 5M1907.100 454.700l-5 5" stroke="#333" stroke-width=".9" fill="none"/>
  <circle cx="1904.600" cy="457.200" r="1.200" fill="#d4d4d4"/>
  <!-- history -->
  <path d="M1895.800 489.300a7.100 7.100 0 1 0-.4-4.900" fill="none" stroke="#d4d4d4" stroke-width="1.200"/>
  <path d="M1893.600 488.400l3.900-.6-1.600 3.300z"/>
  <path d="M1902.200 481.500v4.500l2.700 2.700" fill="none" stroke="#d4d4d4" stroke-width="1.200"/>
  <!-- log -->
  <rect x="1894.900" y="511.800" width="14" height="13.500" rx="1.200" fill="none" stroke="#d4d4d4" stroke-width="1.100"/>
  <path d="M1899 510.500v2M1902 510.500v2M1905 510.500v2" stroke="#d4d4d4" stroke-width="1" fill="none"/>
  <path d="M1898.400 516h7M1898.400 518.800h7M1898.400 521.600h7" stroke="#d4d4d4" stroke-width="1.100" fill="none"/>
</svg>
<!-- ===== 3D viewport model (ambient occlusion render approximated with vector shapes) ===== -->
<svg id="truck" style="left:36px;top:312px" width="1522" height="728" viewBox="36 312 1522 728">
<defs>
  <linearGradient id="gTank" x1="0" y1="622" x2="0" y2="708" gradientUnits="userSpaceOnUse">
    <stop offset="0" stop-color="#ececec"/><stop offset="0.250" stop-color="#dadada"/><stop offset="0.600" stop-color="#c2c2c2"/><stop offset="1" stop-color="#b6b6b6"/>
  </linearGradient>
  <linearGradient id="gTankEnd" x1="636" y1="0" x2="700" y2="0" gradientUnits="userSpaceOnUse">
    <stop offset="0" stop-color="#e6e6e6" stop-opacity=".75"/><stop offset="1" stop-color="#e6e6e6" stop-opacity="0"/>
  </linearGradient>
  <linearGradient id="gSkirt" x1="640" y1="0" x2="826" y2="0" gradientUnits="userSpaceOnUse">
    <stop offset="0" stop-color="#c2c2c2"/><stop offset="0.500" stop-color="#cecece"/><stop offset="1" stop-color="#dadada"/>
  </linearGradient>
  <linearGradient id="gSkirtTop" x1="0" y1="706" x2="0" y2="745" gradientUnits="userSpaceOnUse">
    <stop offset="0" stop-color="#8e8e8e" stop-opacity=".4"/><stop offset="1" stop-color="#8e8e8e" stop-opacity="0"/>
  </linearGradient>
  <linearGradient id="gFender" x1="644" y1="0" x2="718" y2="0" gradientUnits="userSpaceOnUse">
    <stop offset="0" stop-color="#e2e2e2"/><stop offset="0.250" stop-color="#f8f8f8"/><stop offset="0.800" stop-color="#f2f2f2"/><stop offset="1" stop-color="#dcdcdc"/>
  </linearGradient>
  <linearGradient id="gDoor" x1="834" y1="0" x2="905" y2="0" gradientUnits="userSpaceOnUse">
    <stop offset="0" stop-color="#c6c6c6"/><stop offset="1" stop-color="#d2d2d2"/>
  </linearGradient>
  <linearGradient id="gRoof" x1="0" y1="617" x2="0" y2="643" gradientUnits="userSpaceOnUse">
    <stop offset="0" stop-color="#e4e4e4"/><stop offset="1" stop-color="#c8c8c8"/>
  </linearGradient>
  <linearGradient id="gHoodSide" x1="0" y1="720" x2="0" y2="780" gradientUnits="userSpaceOnUse">
    <stop offset="0" stop-color="#c8c8c8"/><stop offset="0.600" stop-color="#d0d0d0"/><stop offset="1" stop-color="#dcdcdc"/>
  </linearGradient>
  <linearGradient id="gPlate" x1="1110" y1="0" x2="1265" y2="0" gradientUnits="userSpaceOnUse">
    <stop offset="0" stop-color="#d8d8d8"/><stop offset="0.500" stop-color="#dedede"/><stop offset="1" stop-color="#e2e2e2"/>
  </linearGradient>
  <linearGradient id="gWing" x1="1270" y1="0" x2="1335" y2="0" gradientUnits="userSpaceOnUse">
    <stop offset="0" stop-color="#dedede"/><stop offset="0.400" stop-color="#c8c8c8"/><stop offset="0.650" stop-color="#e2e2e2"/><stop offset="1" stop-color="#f2f2f2"/>
  </linearGradient>
  <linearGradient id="gFenderL" x1="878" y1="870" x2="955" y2="782" gradientUnits="userSpaceOnUse"><stop offset="0" stop-color="#b2b2b2"/><stop offset="0.550" stop-color="#c6c6c6"/><stop offset="1" stop-color="#e8e8e8"/></linearGradient>
  <radialGradient id="gLamp" cx="0.450" cy="0.450" r="0.600">
    <stop offset="0" stop-color="#d6d6d6"/><stop offset="0.600" stop-color="#c2c2c2"/><stop offset="0.850" stop-color="#a4a4a4"/><stop offset="1" stop-color="#c8c8c8"/>
  </radialGradient>
  <radialGradient id="gBulb" cx="0.400" cy="0.400" r="0.700">
    <stop offset="0" stop-color="#ffffff"/><stop offset="0.700" stop-color="#f2f2f2"/><stop offset="1" stop-color="#d4d4d4"/>
  </radialGradient>
  <filter id="soft" x="-30%" y="-30%" width="160%" height="160%"><feGaussianBlur stdDeviation="2"/></filter>
  <pattern id="mesh" width="3" height="3" patternUnits="userSpaceOnUse" patternTransform="rotate(20)"><rect width="3" height="3" fill="#3a3a3a"/><rect width="1.300" height="3" fill="#8c8c8c"/></pattern>
</defs>
<!-- back hoops (behind tank) -->
<g fill="none" stroke-linecap="round" stroke-linejoin="round">
  <path d="M703.500 636L705 610Q708 599 718 597.500L770 598.500Q777 603 782 616" stroke="#b4b4b4" stroke-width="5.500"/>
  <path d="M746 581L804 574.500L842 582.500" stroke="#d2d2d2" stroke-width="2.400"/>
  <path d="M747 578.500L800 572.500" stroke="#c4c4c4" stroke-width="1.400"/>
  <path d="M853 549.500Q870 547.500 888 548.500Q897 549.500 904 560.500Q915 572 923 590" stroke="#cbcbcb" stroke-width="6"/>
  <path d="M845 556Q852.500 557 858.500 569Q871.500 583 883.500 600" stroke="#cdcdcd" stroke-width="5.500"/>
</g>
<!-- tank body + skirt silhouette -->
<path d="M674 644L716 630.500L755 626.500L826 621.500L826 850L820 848L783.500 838.500L716 819L691 816.300L644 798L643 790.400L636.300 788.500L636.300 771L641 763.500L636 748C635 740 638 730 641 720C643 712 643 705 645 692C650 672 660 655 674 644Z" fill="url(#gSkirt)"/>
<path d="M674 644L716 630.500L755 626.500L826 621.500L826 709L799 709.500L760 706L700 704.500L663 707L641.500 718C643 712 643 705 645 692C650 672 660 655 674 644Z" fill="url(#gTank)"/>
<path d="M674 644L716 630.500L716 705L700 704.500L663 707L641.500 718C643 712 643 705 645 692C650 672 660 655 674 644Z" fill="url(#gTankEnd)"/>
<path d="M641.500 718L663 707L700 704.500L760 706L799 709.500L826 709L826 745L636 745C635.500 738 638.500 728 641.500 718Z" fill="url(#gSkirtTop)"/>
<!-- bracket at tank end -->
<path d="M650.800 665l9-7.500 8.200-6" fill="none" stroke="#cfcfcf" stroke-width="2.600"/>
<path d="M656 656l4 5" fill="none" stroke="#dadada" stroke-width="2"/>
<!-- tail light stack -->
<path d="M636 770.500h8v18h-8z" fill="#dedede"/>
<path d="M636 775h8M636 779.500h8M636 784h8" stroke="#a8a8a8" stroke-width="1"/>
<!-- side rail -->
<path d="M663 707.300l37-2.800 60 1.500 39 3.500" fill="none" stroke="#e2e2e2" stroke-width="3" stroke-linecap="round"/>
<path d="M665 708v4M688 705.500v4.500M712 704.500v4.500M734 705v4.500M760 706v4.500M790 709v4.500" stroke="#d6d6d6" stroke-width="2.200"/>
<!-- straps -->
<g fill="none" stroke="#e6e6e6" stroke-width="1.300" stroke-linejoin="round">
  <path d="M718 640l-21 50 5.700 17"/>
  <path d="M712.300 657v46.500"/>
  <path d="M758.500 630.400l-8.700 17.300 1 27 11.500 34.300"/>
  <path d="M768 632.300l-6.700 15.400v27l14.500 32.600"/>
  <path d="M783.500 632.300l-11.500 19.200-4 52"/>
  <path d="M800.800 632.300l-11.800 17.300-1.700 34.400-5.800 21.400"/>
  <path d="M818 636l-8.600 21.300 2.900 32.700" stroke-width="2.400" stroke="#efefef"/>
</g>
<!-- small fittings along tank top -->
<path d="M688 640.500l3 2M700 636.500l3 2M745 628.500l4 2.500M790 626l4 2.500" stroke="#e4e4e4" stroke-width="2"/>
<!-- skirt details -->
<circle cx="655.600" cy="724.500" r="1.600" fill="#e8e8e8"/>
<path d="M724.800 738.500l54.800 7.500 1 85.700-52.900-14.400z" fill="#d2d2d2" stroke="#808080" stroke-width=".9" stroke-linejoin="round"/>
<path d="M751.700 742.300l1 82" stroke="#7c7c7c" stroke-width=".9"/>
<ellipse cx="748" cy="782.700" rx="1.700" ry="3" fill="#3c3c3c"/>
<circle cx="805.600" cy="772" r="8.300" fill="#d4d4d4" stroke="#5e5e5e" stroke-width="1"/>
<circle cx="793.300" cy="738.800" r="4.200" fill="#f4f4f4" stroke="#d8d8d8" stroke-width="1.200"/>
<!-- rear fender -->
<path d="M644 798l-1-40.300q2-12 9.700-16.400 9-6.500 21-6.700l29 2.900q8 1.500 11.300 8.500l4 34.800-2 38.200-25-2.700z" fill="url(#gFender)"/>
<path d="M653.700 800l.9-27q3-12 9.600-15.300 9 1 13.500 9.600 7 15 9.600 25l3.700 23z" fill="#fbfbfb"/>
<path d="M653.700 800l.9-27q3-12 9.600-15.300 9 1 13.500 9.600 7 15 9.600 25l3.700 23" fill="none" stroke="#d2d2d2" stroke-width="1"/>
<!-- ===== cab ===== -->
<!-- cab side base -->
<path d="M824 636L898 640L948 705L938 720L936 780L906.500 794L893 813.500L883.500 846L881.500 853L834.400 839.400L824 850Z" fill="#cdcdcd"/>
<!-- rear post -->
<path d="M822.500 640L834.400 645L834.400 839.400L826 850L823 838Z" fill="#dcdcdc"/>
<path d="M826.500 712C830 740 831 800 829 838" fill="none" stroke="#8a8a8a" stroke-width="1.200"/>
<!-- roof -->
<path d="M822 626L830 622L864 618.800L912 617L1000 620L1020 637L1031 641L1037 650L993 633L897 643L826 641Z" fill="url(#gRoof)"/>
<path d="M822.500 640L826 631L897 634L900 648L897 643Z" fill="#d2d2d2"/>
<!-- side window recess -->
<path d="M841 651.500L887.300 653.500L910.400 703.500L845 699.600Z" fill="#b4b4b4"/>
<path d="M845.800 655.400L885.400 657.300L906.500 701.500L847.500 697.700Z" fill="#e4e4e4"/>
<path d="M847 661.500L888 663.500M847 666L890 668M847 670.500L892 672.500M847 675L894 677M847 679.500L896 681.500M847 684L898 686M847 688.500L900.500 690.500M847 693L903 695" stroke="#cacaca" stroke-width="1.100" fill="none"/>
<path d="M862.300 673.700H877.700V693.800H862.300Z" fill="#cfcfcf" stroke="#b4b4b4" stroke-width="1"/>
<path d="M864.500 676H875.500V691.500H864.500Z" fill="#e6e6e6"/>
<path d="M877.700 675.600L892 672.700L892 703.500L877.700 705.400Z" fill="#e6e6e6"/>
<path d="M884 684V697" stroke="#f2f2f2" stroke-width="1.600"/>
<!-- belt band, door, pillar -->
<path d="M834.400 708L910.400 715.400L910.400 742.300L834.400 735.600Z" fill="#bdbdbd"/>
<path d="M834.400 736.500L904.600 744.200L904.600 790.400L893 807.700L881.500 852L834.400 838.500Z" fill="url(#gDoor)"/>
<path d="M904.600 715L937 719L935.400 780L906 794L904.600 790.400Z" fill="#dadada"/>
<path d="M910.400 715.400L937 719L936.500 745L910.400 742.300Z" fill="#cecece"/>
<path d="M903.500 744.500V790" stroke="#ededed" stroke-width="2"/>
<path d="M834.400 838.500L881.500 852" stroke="#5a5a5a" stroke-width="1"/>
<!-- handle + badge -->
<path d="M840 722.700H851M843.500 719.500Q839.500 722.700 843.500 726" fill="none" stroke="#f0f0f0" stroke-width="1.400"/>
<path d="M878.500 757H892" stroke="#9c9c9c" stroke-width="2.400"/>
<!-- visor -->
<path d="M897 637L992 625.800L1034.600 648.800L1037 652L996 641L987 645L910 654L900 648Z" fill="#bdbdbd"/>
<path d="M897 637L992 625.800L1034.600 648.800" fill="none" stroke="#d6d6d6" stroke-width="1.600"/>
<!-- windshield frame -->
<path d="M898 643L993 633L1012 683L935 703Z" fill="#c8c8c8"/>
<path d="M910.600 655.600L987.500 645L1003.800 681.500L933.700 699.800Z" fill="#e2e2e2"/>
<path d="M910.600 655.600L987.500 645L990.300 651.200L914.400 662Z" fill="#f8f8f8"/>
<path d="M914.400 662L990.300 651.200M918.200 668.300L993 657.400M922 674.600L995.700 663.600M925.900 680.900L998.400 669.800M929.800 687.200L1001.100 676M933 693.500L1003 681.800" stroke="#9e9e9e" stroke-width="1.200" fill="none"/>
<path d="M933.700 699.800L1003.800 681.500" stroke="#b0b0b0" stroke-width="2"/>
<!-- A pillar -->
<path d="M897 643.800L910.600 655.600L933.700 699.800L948 705L945 708L930 703Z" fill="#cfcfcf"/>
<!-- right window -->
<path d="M996 641L1032.700 648.800L1058.500 689L1015.400 683.500Z" fill="#cecece"/>
<path d="M1017.300 660.400L1032.700 664L1044 682.500L1027 679.600Z" fill="#adadad" stroke="#9a9a9a" stroke-width="1"/>
<path d="M987.500 645L996 641L1015.400 683.500L1003.800 681.500Z" fill="#d6d6d6"/>
<!-- antenna -->
<path d="M1072 675.800H1079.600V696H1071Z" fill="#d2d2d2"/>
<!-- ===== roof rack + lights ===== -->
<g fill="none" stroke-linecap="round" stroke-linejoin="round">
  <path d="M844 607V584Q844 581 847 580.800L891 578.500" stroke="#dcdcdc" stroke-width="3"/>
  <path d="M891 579L930 581.500M1012 586.500L1000 586" stroke="#d0d0d0" stroke-width="2.600"/>
  <path d="M891 606V577Q891 573.500 894.500 573.700L1009 581Q1014 581.400 1014 586V611" stroke="#e4e4e4" stroke-width="3.400"/>
  <path d="M833.500 608L912 605.400L1020 610" stroke="#ebebeb" stroke-width="4.400"/>
  <path d="M912 614L1006.500 617" stroke="#dedede" stroke-width="4"/>
  <path d="M836 613.500L905 611.500" stroke="#cdcdcd" stroke-width="3"/>
  <path d="M839 611Q837.500 622 839 636M858 610.500L862 622M873 610L877.500 621" stroke="#e2e2e2" stroke-width="3.600"/>
  <path d="M888 612V638" stroke="#e8e8e8" stroke-width="4.200"/>
  <path d="M911 633V616Q911.500 608.500 920 607.500" stroke="#e4e4e4" stroke-width="3.800"/>
  <path d="M1006 612V630M1014 612L1016 632" stroke="#dedede" stroke-width="3"/>
  <path d="M925 606V596M951 606V600M975 606V600M996 607V604" stroke="#cfcfcf" stroke-width="2.600"/>
</g>
<circle cx="928.600" cy="595.800" r="8.800" fill="url(#gLamp)" stroke="#a6a6a6" stroke-width="1.200"/><circle cx="928.600" cy="595.800" r="5.5" fill="none" stroke="#b8b8b8" stroke-width="1"/>
<circle cx="952.700" cy="591" r="10.600" fill="url(#gLamp)" stroke="#a6a6a6" stroke-width="1.200"/><circle cx="952.700" cy="591" r="6.6" fill="none" stroke="#b8b8b8" stroke-width="1"/>
<circle cx="974.800" cy="592" r="10.600" fill="url(#gLamp)" stroke="#a6a6a6" stroke-width="1.200"/><circle cx="974.800" cy="592" r="6.6" fill="none" stroke="#b8b8b8" stroke-width="1"/>
<circle cx="995" cy="599.600" r="9.300" fill="url(#gLamp)" stroke="#a6a6a6" stroke-width="1.200"/><circle cx="995" cy="599.600" r="5.8" fill="none" stroke="#b8b8b8" stroke-width="1"/>
<path d="M928.600 590V601M952.700 585V597M974.800 586V598M995 594V605" stroke="#b4b4b4" stroke-width="1.200"/>
<path d="M935 621L1005 622.500" stroke="#cacaca" stroke-width="8" stroke-linecap="round"/>
<circle cx="958.500" cy="620.800" r="4.800" fill="#d8d8d8" stroke="#aaaaaa" stroke-width="1.200"/>
<circle cx="978.700" cy="620.800" r="4.800" fill="#d8d8d8" stroke="#aaaaaa" stroke-width="1.200"/>
<circle cx="998.800" cy="621.700" r="4.800" fill="#d8d8d8" stroke="#aaaaaa" stroke-width="1.200"/>
<path d="M889 638m-4 0a4 2 0 1 0 8 0a4 2 0 1 0-8 0M839 636m-3.500 0a3.500 1.800 0 1 0 7 0a3.500 1.800 0 1 0-7 0" fill="#e6e6e6"/>
<!-- ===== hood ===== -->
<!-- cowl -->
<path d="M933.700 699.800L1003.800 681.500L1058.500 689L1100 697L1100 705L1059.600 696L1000 689.200L948 704.600L945 708Z" fill="#d4d4d4"/>
<!-- hood top -->
<path d="M948 704.600L1000 689.200L1059.600 696L1100 704.500L1154.600 706.500L1087.300 707.500L1069 712L1052 724L1046 728L938.500 720Z" fill="#dedede"/>
<!-- hood nose -->
<path d="M1042 733.500L1056.500 718L1087.300 707.500L1100 697L1154.600 706.500L1173.800 716L1193 731.500L1204.600 743L1204 750L1110.400 751L1109 790L1060 790Z" fill="#eaeaea"/>
<path d="M1058.500 689L1100 697L1154.600 706.500L1100 704.500L1059.600 696Z" fill="#ececec"/>
<!-- shadow between hood nose and plate -->
<path d="M1084 733Q1102 748 1108 788" fill="none" stroke="#c2c2c2" stroke-width="10" stroke-linecap="round" opacity=".6" filter="url(#soft)"/>
<!-- hood side -->
<path d="M938.500 720L1046 728L1042 733.500L1035 745L1012 756L1010 769L973.800 775L935.600 780Z" fill="url(#gHoodSide)"/>
<path d="M938.500 750.800L1000 756.500L1000 768L955.800 773.800L938.500 777.700Z" fill="#c6c6c6"/>
<path d="M940 754L999 759.500M940 758.500L999 763.500M940 763L995 767.500M940 767.500L972 770M940 772L958 772.500" stroke="#b0b0b0" stroke-width="1.400" fill="none" stroke-dasharray="8 2"/>
<!-- seams -->
<path d="M948 704.600L938.500 720L936.500 745L935.600 779.600" fill="none" stroke="#555" stroke-width="1"/>
<path d="M1154.600 706.500L1087.300 707.500L1069 712L1056.500 718L1052 724L1042 733.500" fill="none" stroke="#666" stroke-width="1"/>
<path d="M1000 689.200L1059.600 696L1100 704.500" fill="none" stroke="#b4b4b4" stroke-width=".9"/>
<!-- grille mesh -->
<ellipse cx="1170" cy="743.500" rx="17" ry="4.800" fill="url(#mesh)"/>
<path d="M1153 748Q1170 735 1187 748Z" fill="url(#mesh)"/>
<!-- ===== front wheel arch ===== -->
<!-- wheel well interior -->
<path d="M889 871L895 826L908 803L939 792L966 796L989 815.400L1004.600 846L1012.300 873L1014 900L1000.800 848L973.800 842.300L952.700 844L947 869Z" fill="#d2d2d2"/>
<path d="M895 869L900.800 825L912.300 803.800L939.200 794.200L927.700 815.400L916 865.400Z" fill="#dadada"/>
<path d="M927.700 815.400L943 794.200L954.600 796.200L939.200 834.600L929.600 865.400L916 865.400Z" fill="#e8e8e8"/>
<path d="M954.600 798L973.800 807.700L993 830.800L1000.800 848L973.800 842.300L952.700 844L958.500 819.200Z" fill="#cccccc"/>
<!-- fender outer -->
<path d="M875.800 873L883.500 846L893 813.500L906.500 794L935.400 780.800L973.800 775L1020 770L1046 764L1062 800L1046 814.400L1034.600 857.700L1037.500 925L1013.500 919L1014 900L1012.300 873L1004.600 846L989 815.400L966 796L939 792L910.400 802L897 823L887.300 875Z" fill="#eaeaea"/>
<path d="M875.800 873L883.500 846L893 813.500L906.500 794L935.400 780.800L960 777L966 796L939 792L910.400 802L897 823L887.300 875Z" fill="url(#gFenderL)"/>
<path d="M887.300 875L897 823L910.400 802L939 792L966 796L989 815.400L1004.600 846L1012.300 873L1014 900" fill="none" stroke="#f6f6f6" stroke-width="3"/>
<path d="M878 868L886 840L896 812L909 796L936 784L974 778L1020 773.500" fill="none" stroke="#cfcfcf" stroke-width="3"/>
<path d="M1013.500 919L1037.500 925L1037 905L1014 900Z" fill="#f2f2f2"/>
<path d="M875.800 873L887.300 875L889 868L878 866Z" fill="#d8d8d8"/>
<!-- step + sill -->
<path d="M822 847L834.400 839L881.500 852.500L881 856.500L826 851Z" fill="#dcdcdc"/>
<path d="M784.600 838.400L881 855.700L878 864.400L848 863L845 873L836.500 873L809 864.400L813.400 850Z" fill="#ededed"/>
<path d="M819 854L839 858.600L835 867L815 863Z" fill="#252525"/>
<path d="M716 819L784.600 838.400" stroke="#f0f0f0" stroke-width="1.400"/>
<!-- ===== front end ===== -->
<!-- filler behind headlight / between fender and plate -->
<path d="M1010 745L1046 728L1075 735L1110.400 751L1113 825L1095 880L1077 848L1063.500 813.500L1046 814.400L1020 772L1010 769Z" fill="#dedede"/>
<path d="M1084 733Q1102 748 1108 788" fill="none" stroke="#c2c2c2" stroke-width="10" stroke-linecap="round" opacity=".6" filter="url(#soft)"/>
<path d="M1075 790L1113 790L1125 865L1103.800 880.800L1086.500 879L1077 848Z" fill="#d6d6d6"/>
<!-- right wing plate -->
<path d="M1265.800 809.600L1270.600 807.700L1273.500 789.400L1292.700 788.500L1317.700 813.500L1313.800 819L1306 825L1319.600 878.500L1335 936L1335 939L1329 940L1332 947.700L1303 942L1290 900L1275 850Z" fill="url(#gWing)"/>
<path d="M1273.500 789.400L1292.700 788.500L1317.700 813.500L1313.800 819L1300 822L1283 800Z" fill="#d8d8d8"/>
<!-- front plate -->
<path d="M1110.400 749.800L1160 748L1263.800 739.400L1264.800 810L1268 850L1125 865L1112 822Z" fill="url(#gPlate)"/>
<path d="M1110.400 749.800L1117.700 749.500L1119.500 824L1112 822Z" fill="#c8c8c8"/>
<path d="M1117.700 749.500L1160 748L1263.800 739.400" fill="none" stroke="#e0e0e0" stroke-width="1.200"/>
<!-- right headlight -->
<path d="M1204 743Q1206 730 1222 728.500L1252 728.500L1262 739.600L1204 744Z" fill="#dcdcdc"/>
<path d="M1229 739V730Q1229 724.500 1235 724.500L1256 724.500Q1262 724.500 1262 730V739.500M1240 724.500V739M1229 731H1262" fill="none" stroke="#d2d2d2" stroke-width="1.300"/>
<path d="M1238 739Q1239 729 1250 727" fill="none" stroke="#b0b0b0" stroke-width="1.200"/>
<!-- cowcatcher backing -->
<path d="M1103.800 880.800L1125 862L1138 846L1264.800 831L1290 890L1303 942L1305 955.400L1285 965L1263.800 977.500L1237 971.700L1219.600 983.300L1198.500 977.500L1180.800 988.500L1132.700 984.600L1134.600 1000L1107.700 996Z" fill="#e6e6e6"/>
<path d="M1150 850L1264 838L1290 935L1180 975Z" fill="#ebebeb"/>
<!-- horizontal bars -->
<g fill="none" stroke="#f7f7f7" stroke-width="5" stroke-linecap="round">
  <path d="M1150 845L1217 842L1264 834.600"/>
  <path d="M1108 897L1152 895L1200 889L1252 884L1273 874"/>
  <path d="M1115 933L1161 932L1204 924L1241 912L1277 905L1298 896"/>
  <path d="M1129 973L1165 973L1206 967L1252 960L1290 946L1312 934"/>
</g>
<!-- tines -->
<g fill="#fdfdfd">
  <path d="M1132.700 811.500L1142.300 810.600Q1150 870 1180.800 988.500L1165 987Q1140 880 1132.700 811.500Z"/>
  <path d="M1173 807.700L1180.800 806.700Q1186 870 1219.600 983.300L1207 980Q1178 880 1173 807.700Z"/>
  <path d="M1210 801L1215.800 801Q1226 870 1263.800 977.500L1250 974.500Q1218 880 1210 801Z"/>
  <path d="M1233 800L1239 800Q1248 865 1285 965L1273 964Q1241 875 1233 800Z"/>
  <path d="M1254 797L1260 797Q1270 860 1305 955.400L1294 954.500Q1262 870 1254 797Z"/>
</g>
<path d="M1142.300 810.600Q1150 870 1180.800 988.500M1180.800 806.700Q1186 870 1219.600 983.300M1215.800 801Q1226 870 1263.800 977.500M1239 800Q1248 865 1285 965M1260 797Q1270 860 1305 955.400" fill="none" stroke="#d2d2d2" stroke-width="1.200"/>
<!-- left post / bracket under headlight -->
<path d="M1031.500 790L1075.800 790L1075.800 800L1062 812L1046 814L1036 850L1031.500 880Z" fill="#f1f1f1"/>
<!-- left side plates -->
<path d="M1086.500 879L1103.800 880.800L1134.600 1000L1107.700 996Z" fill="#ededed"/>
<path d="M1086.500 879L1107.700 996" stroke="#bdbdbd" stroke-width="1.400"/>
<circle cx="1098" cy="903" r="3" fill="#f8f8f8" stroke="#d4d4d4" stroke-width=".8"/>
<circle cx="1104" cy="935" r="3" fill="#f8f8f8" stroke="#d4d4d4" stroke-width=".8"/>
<circle cx="1114" cy="980" r="3" fill="#f8f8f8" stroke="#d4d4d4" stroke-width=".8"/>
<path d="M1046 814.400L1063.500 813.500L1077 848L1107.700 996L1104 998L1041.300 977L1034.600 857.700Z" fill="#f5f5f5"/>
<path d="M1063.500 813.500L1077 848L1107.700 996" fill="none" stroke="#dcdcdc" stroke-width="1.400"/>
<!-- left headlight -->
<ellipse cx="1024" cy="758" rx="15" ry="19.500" fill="#f0f0f0"/>
<path d="M1024 738.500L1050 740L1050 779L1024 777.500Z" fill="#f0f0f0"/>
<circle cx="1053" cy="759.500" r="14.300" fill="url(#gBulb)" stroke="#bdbdbd" stroke-width="1"/>
<g fill="none" stroke="#e4e4e4" stroke-width="1.400">
  <path d="M1033.500 880V741Q1033.500 734.600 1040 734.600L1067 734.600Q1074.500 734.600 1074.500 741V792.300H1036"/>
  <path d="M1036 751.500H1080M1036 772.300H1080M1057 734.600V792"/>
  <path d="M1046 792V797H1062V792"/>
</g>
<path d="M1031.500 741Q1031.500 734 1040 734L1036 737L1036 880L1031.500 880Z" fill="#f4f4f4"/>
<!-- chain hooks -->
<path d="M1046 814.400Q1050 809 1057 811L1063.500 813.500L1070 832L1052 830Z" fill="#f2f2f2"/>
<circle cx="1052" cy="821" r="2" fill="#8e8e8e"/>
<path d="M1052 822Q1060 845 1083 844" fill="none" stroke="#ececec" stroke-width="4.500" stroke-linecap="round"/>
<path d="M1052 822Q1060 845 1083 844" fill="none" stroke="#c4c4c4" stroke-width="1" transform="translate(-2.500 2.500)"/>
<path d="M1280 795Q1296 812 1312 818" fill="none" stroke="#ececec" stroke-width="3.600" stroke-linecap="round"/>
<circle cx="1281" cy="796" r="1.800" fill="#7e7e7e"/>
<!-- chains -->
<g fill="none" stroke-linecap="round">
  <path d="M1082.700 844L1120 864L1160 890L1179 899.600L1206 909L1237 910L1260 901.500L1279 882L1290.800 855.400L1308 822" stroke="#a2a2a2" stroke-width="6.400" stroke-dasharray="9 4"/>
  <path d="M1082.700 844L1120 864L1160 890L1179 899.600L1206 909L1237 910L1260 901.500L1279 882L1290.800 855.400L1308 822" stroke="#f0f0f0" stroke-width="3.600" stroke-dasharray="9 4"/>
  <path d="M1082.700 844L1120 864L1160 890L1179 899.600L1206 909L1237 910L1260 901.500L1279 882L1290.800 855.400L1308 822" stroke="#bdbdbd" stroke-width="1.200" stroke-dasharray="6 7" stroke-dashoffset="-1.500"/>
  <path d="M1092.300 871L1125 898L1160 922.700L1185 940L1213.800 951.500L1233 959L1252 959L1271.500 949.600L1285 924.600L1296.500 903.500L1294.600 874.600L1296 846" stroke="#a2a2a2" stroke-width="5.200" stroke-dasharray="7 3.500"/>
  <path d="M1092.300 871L1125 898L1160 922.700L1185 940L1213.800 951.500L1233 959L1252 959L1271.500 949.600L1285 924.600L1296.500 903.500L1294.600 874.600L1296 846" stroke="#eeeeee" stroke-width="2.800" stroke-dasharray="7 3.500"/>
  <path d="M1092.300 871L1125 898L1160 922.700L1185 940L1213.800 951.500L1233 959L1252 959L1271.500 949.600L1285 924.600L1296.500 903.500L1294.600 874.600L1296 846" stroke="#bdbdbd" stroke-width="1" stroke-dasharray="4.500 6" stroke-dashoffset="-1.200"/>
</g>
<!-- ===== front hoops (in front of tank) ===== -->
<g fill="none" stroke-linecap="round" stroke-linejoin="round">
  <path d="M676 642L673 624.600L687.300 593Q689 591.500 692 592L776.700 595.600Q781 600 785 621" stroke="#e9e9e9" stroke-width="3"/>
  <path d="M676 642L673 624.600L687.300 593" stroke="#f4f4f4" stroke-width="4"/>
  <path d="M733.500 637L743 583L749 580.500" stroke="#f4f4f4" stroke-width="6.500"/>
  <path d="M768.300 628L772.500 613Q788 590 805.800 571.700Q816 562 826.700 557Q846 550.500 858 549.300" stroke="#f0f0f0" stroke-width="6"/>
  <path d="M808 632L805.800 619.600Q810 598 816 578Q820 566 826 559Q834 555.500 845 556" stroke="#f2f2f2" stroke-width="6"/>
</g>

</svg>

</body>
</html>
